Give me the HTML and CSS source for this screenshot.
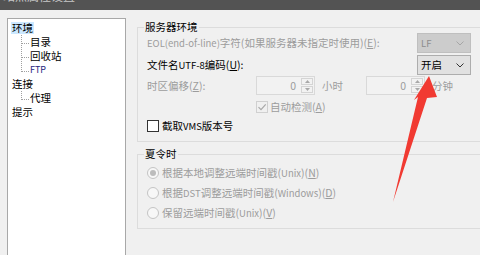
FILE: index.html
```html
<!DOCTYPE html>
<html lang="zh-CN">
<head>
    <meta charset="UTF-8">
    <title>站点属性设置</title>
    <link rel="stylesheet" href="styles.css">
</head>
<body>
<div class="titlebar">
    <span class="title">站点属性设置</span>
</div>

<div class="window">
    <!-- Left navigation tree -->
    <div class="tree">
        <ul class="tree-root">
            <li><span class="node selected">环境</span>
                <ul class="sub">
                    <li>目录</li>
                    <li>回收站</li>
                    <li class="ftp">FTP</li>
                </ul>
            </li>
            <li><span class="node">连接</span>
                <ul class="sub">
                    <li>代理</li>
                </ul>
            </li>
            <li><span class="node">提示</span></li>
        </ul>
    </div>

    <!-- Settings -->
    <div class="settings">
        <fieldset class="group group-server">
            <legend>服务器环境</legend>

            <div class="row row-combo">
                <span class="label disabled"><span class="en">EOL(end-of-line)</span>字符(如果服务器未指定时使用)(<u>E</u>):</span>
                <div class="combo combo-disabled">
                    <span class="en">LF</span>
                    <svg class="chevron" viewBox="0 0 8 5"><path d="M0.5 0.5 4 4 7.5 0.5"></path></svg>
                </div>
            </div>

            <div class="row row-combo">
                <span class="label">文件名<span class="en">UTF-8</span>编码(<u>U</u>):</span>
                <div class="combo">
                    <span>开启</span>
                    <svg class="chevron" viewBox="0 0 8 5"><path d="M0.5 0.5 4 4 7.5 0.5"></path></svg>
                </div>
            </div>

            <div class="row row-spin">
                <span class="label label-tz disabled">时区偏移(<u>Z</u>):</span>
                <div class="spin">
                    <span class="spin-value">0</span>
                    <div class="spin-btns">
                        <span class="spin-btn"><svg viewBox="0 0 5 3"><path d="M2.5 0 5 3H0Z"></path></svg></span>
                        <span class="spin-btn"><svg viewBox="0 0 5 3"><path d="M0 0H5L2.5 3Z"></path></svg></span>
                    </div>
                </div>
                <span class="unit unit-hour disabled">小时</span>
                <div class="spin">
                    <span class="spin-value">0</span>
                    <div class="spin-btns">
                        <span class="spin-btn"><svg viewBox="0 0 5 3"><path d="M2.5 0 5 3H0Z"></path></svg></span>
                        <span class="spin-btn"><svg viewBox="0 0 5 3"><path d="M0 0H5L2.5 3Z"></path></svg></span>
                    </div>
                </div>
                <span class="unit disabled">分钟</span>
            </div>

            <div class="row row-check row-auto">
                <span class="check check-disabled">
                    <svg viewBox="0 0 10 10"><path d="M1.5 5.2 4 7.7 8.7 2.3"></path></svg>
                </span>
                <span class="disabled">自动检测(<u>A</u>)</span>
            </div>

            <div class="row row-check">
                <span class="check"></span>
                <span>截取<span class="en">VMS</span>版本号</span>
            </div>
        </fieldset>

        <fieldset class="group group-dst">
            <legend>夏令时</legend>
            <div class="row row-radio">
                <span class="radio checked"></span>
                <span class="disabled">根据本地调整远端时间戳(<span class="en">Unix</span>)(<u>N</u>)</span>
            </div>
            <div class="row row-radio">
                <span class="radio"></span>
                <span class="disabled">根据<span class="en">DST</span>调整远端时间戳(<span class="en">Windows</span>)(<u>D</u>)</span>
            </div>
            <div class="row row-radio">
                <span class="radio"></span>
                <span class="disabled">保留远端时间戳(<span class="en">Unix</span>)(<u>V</u>)</span>
            </div>
        </fieldset>
    </div>
</div>

<!-- Red annotation arrow drawn over the dialog -->
<svg class="arrow" viewBox="0 0 480 255">
    <polygon points="429,76 437,97 427,98 393,202 418,97 414,100"></polygon>
</svg>
</body>
</html>
```

FILE: styles.css
```css
* {
    box-sizing: border-box;
}

body {
    margin: 0;
    width: 480px;
    height: 255px;
    overflow: hidden;
    position: relative;
    background-color: #f0f0f0;
    color: #000;
    font-family: "Noto Sans CJK SC", "Noto Sans", sans-serif;
    font-size: 10.5px;
    line-height: 14px;
}

u {
    text-decoration-thickness: 1px;
    text-underline-offset: 1px;
}

/* Latin runs render a bit smaller than the CJK text */
.en {
    font-size: 9.5px;
}

.titlebar {
    height: 10px;
    background-color: #535353;
    overflow: hidden;
}

.title {
    display: block;
    margin-top: -11px;
    padding-left: 3px;
    color: #c8c8c8;
    font-size: 12px;
    line-height: 13px;
}

.window {
    display: flex;
    padding: 8px 0 0 7px;
}

/* Tree */
.tree {
    width: 119px;
    height: 240px;
    flex-shrink: 0;
    background-color: #fff;
    border: 1px solid #a8a8a8;
    border-bottom: none;
    padding: 2px 0 0 3px;
}

.tree ul {
    list-style: none;
    margin: 0;
    padding: 0;
}

.tree li {
    line-height: 14px;
}

.node {
    display: inline-block;
    padding: 0 1px;
    line-height: 14px;
}

.node.selected {
    background-color: #cce8ff;
    line-height: 12px;
    margin: 1px 0;
    vertical-align: top;
}

.tree .sub {
    padding-left: 19px;
}

.sub li {
    position: relative;
    height: 14px;
}

.sub li::before {
    content: "";
    position: absolute;
    left: -9px;
    top: -6px;
    width: 7px;
    height: 14px;
    border-left: 1px dotted #a0a0a0;
    border-bottom: 1px dotted #a0a0a0;
}

.sub li:first-child::before {
    top: 0;
    height: 8px;
}

.sub .ftp {
    color: #26267e;
    font-size: 9px;
}

/* Settings */
.settings {
    margin-left: 11px;
    flex-shrink: 0;
}

.group {
    width: 355px;
    margin: 3px 0 0;
    padding: 0 20px 8px 6px;
    border: 1px solid #dcdcdc;
    min-width: 0;
}

.group legend {
    padding: 0 1px;
    line-height: 12px;
}

.group-dst {
    margin-top: 6px;
    padding-bottom: 5px;
}

.row {
    display: flex;
    align-items: center;
    padding-left: 3px;
    white-space: nowrap;
}

.row-combo {
    height: 20px;
}

.row-combo + .row-combo {
    margin-top: 2px;
}

.row-spin {
    height: 19px;
    margin-top: 1px;
}

.row-check {
    height: 14px;
    margin-top: 5px;
}

.row-auto {
    padding-left: 112px;
}

.row-radio {
    height: 20px;
}

.row-radio:first-of-type {
    margin-top: 3px;
}

.disabled {
    color: #9c9c9c;
}

.label-tz {
    width: 109px;
}

/* Combo box */
.combo {
    display: flex;
    align-items: center;
    justify-content: space-between;
    width: 54px;
    height: 20px;
    margin-left: auto;
    padding: 0 6px 0 3px;
    background-color: #e1e1e1;
    border: 1px solid #adadad;
}

.chevron {
    width: 8px;
    height: 5px;
    fill: none;
    stroke: #333;
    stroke-width: 1;
}

.combo-disabled {
    background-color: #cccccc;
    border-color: #bfbfbf;
    color: #8c8c8c;
}

.combo-disabled .chevron {
    stroke: #a6a6a6;
}

/* Spin box */
.spin {
    display: flex;
    align-items: center;
    width: 59px;
    height: 19px;
    border: 1px solid #d9d9d9;
    background-color: #f2f2f2;
    color: #9c9c9c;
}

.spin-value {
    flex: 1;
    text-align: right;
    padding-right: 5px;
}

.spin-btns {
    display: flex;
    flex-direction: column;
    gap: 1px;
    margin-right: 1px;
}

.spin-btn {
    display: flex;
    align-items: center;
    justify-content: center;
    width: 12px;
    height: 7px;
    border: 1px solid #d4d4d4;
}

.spin-btn svg {
    width: 5px;
    height: 3px;
    fill: #a8a8a8;
}

.unit {
    margin-left: 7px;
}

.unit-hour {
    margin-right: 23px;
}

/* Check boxes and radios */
.check {
    display: flex;
    align-items: center;
    justify-content: center;
    width: 12px;
    height: 12px;
    margin-right: 3px;
    background-color: #fff;
    border: 1px solid #333;
}

.check-disabled {
    background-color: transparent;
    border-color: #d0d0d0;
    margin-right: 2px;
}

.check svg {
    width: 10px;
    height: 10px;
    fill: none;
    stroke: #a8a8a8;
    stroke-width: 1.2;
}

.radio {
    display: flex;
    align-items: center;
    justify-content: center;
    width: 12px;
    height: 12px;
    margin-right: 3px;
    border: 1px solid #c4c4c4;
    border-radius: 50%;
    background-color: #f7f7f7;
}

.radio.checked::after {
    content: "";
    width: 6px;
    height: 6px;
    border-radius: 50%;
    background-color: #bcbcbc;
}

/* Annotation overlay */
.arrow {
    position: absolute;
    left: 0;
    top: 0;
    width: 480px;
    height: 255px;
    pointer-events: none;
}

.arrow polygon {
    fill: #f13a32;
}
```
